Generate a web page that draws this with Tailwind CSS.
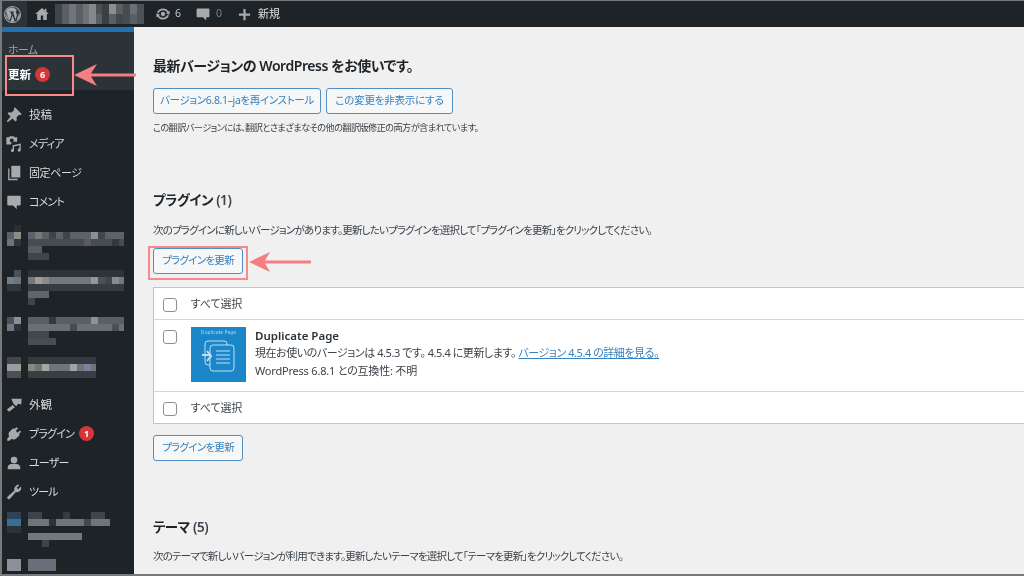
<!DOCTYPE html>
<html lang="ja">
<head>
<meta charset="utf-8">
<script src="https://cdn.jsdelivr.net/npm/@tailwindcss/browser@4"></script>
<title>WordPress 更新</title>
</head>
<body class="m-0 bg-[#f0f0f1]">
<div class="relative w-[1024px] h-[576px] overflow-hidden bg-[#f0f0f1] border-l-2 border-t border-b-2 border-[#77797b] font-['Noto_Sans','Noto_Sans_CJK_JP',sans-serif] [font-feature-settings:'palt'] text-[#3c434a] text-[11.5px] flex flex-col blur-[0.3px]">
  <!-- admin bar -->
  <header class="h-[26px] shrink-0 bg-[#1d2327] text-[#c3c4c7] flex items-center text-[10.5px]">
    <div class="w-[25px] h-[26px] bg-[#2c3338] flex items-center pl-[1px]">
      <svg viewBox="0 0 20 20" class="w-[19px] h-[19px]" fill="#a7aaad"><path fill-rule="evenodd" d="M10 1a9 9 0 1 1 0 18 9 9 0 0 1 0-18Zm0 1a8 8 0 1 0 0 16 8 8 0 0 0 0-16ZM3.200 7l3.600 9.600 2.200-6.300-1-2.600-1-.1v-.8h4.600v.8l-1 .1 2.600 7.600 1-3.100c.4-1.300.5-2 .1-3-.4-.8-.9-1.400-.8-2.100.1-.9 1-1.200 1.300-1.200A7.300 7.300 0 0 0 10 2.700 7.300 7.300 0 0 0 3.200 7Zm13.600.7c.1 1-.1 2-.6 3.300l-2.500 6.500a7.400 7.400 0 0 0 3.100-9.800ZM10.100 11l-2.200 6.300a7.400 7.400 0 0 0 4.400-.1L10.100 11Zm-7.400-2.500a7.400 7.400 0 0 0 3.800 7.500L2.700 8.500Z"/></svg>
    </div>
    <div class="ml-[7px] flex items-center">
      <svg viewBox="0 0 20 20" class="w-[16px] h-[16px]" fill="#a7aaad"><path d="M10 2.500 1.500 10H4v7.500h4.500V12h3v5.500H16V10h2.500L15.500 7.300V3.500h-2v2L10 2.500Z"/></svg>
      <svg class="ml-[5px] w-[89px] h-[20px]" viewBox="0 0 90 20" shape-rendering="crispEdges"><rect width="90" height="20" fill="#5a5f64"/><rect x="0" width="7" height="20" fill="#3f454a"/><rect x="14" width="7" height="20" fill="#71757a"/><rect x="28" width="6" height="20" fill="#6f7378"/><rect x="34" width="7" height="20" fill="#85878a"/><rect x="41" y="0" width="7" height="10" fill="#4b5055"/><rect x="48" width="7" height="20" fill="#3a3f44"/><rect x="55" width="7" height="10" fill="#8b8d8e"/><rect x="62" y="10" width="7" height="10" fill="#43484d"/><rect x="69" width="7" height="20" fill="#474c51"/><rect x="76" width="7" height="10" fill="#6b7075"/><rect x="83" width="7" height="20" fill="#4d5257"/></svg>
    </div>
    <div class="ml-[11px] flex items-center gap-[4px]">
      <svg viewBox="0 0 20 20" class="w-[16px] h-[16px]" fill="#a7aaad"><path d="M10 3c3 0 5.400 1.500 7 4l1.500-1.200-.4 5-4.600-1.600 1.700-1.100C13.900 6.400 12.100 5.300 10 5.300c-2.300 0-4.300 1.400-5.300 3.400L2.500 8C3.800 5 6.700 3 10 3Zm0 14c-3 0-5.400-1.500-7-4l-1.500 1.200.4-5 4.600 1.600-1.700 1.100c1.300 1.700 3.100 2.800 5.200 2.800 2.300 0 4.300-1.400 5.300-3.400l2.200.7C16.200 15 13.300 17 10 17Z"/><circle cx="10" cy="10" r="2.700"/></svg>
      <span>6</span>
    </div>
    <div class="ml-[14px] flex items-center gap-[5px]">
      <svg viewBox="0 0 20 20" class="w-[16px] h-[16px]" fill="#a7aaad"><path d="M3 3h14a1 1 0 0 1 1 1v9a1 1 0 0 1-1 1h-3v4l-4-4H3a1 1 0 0 1-1-1V4a1 1 0 0 1 1-1Z"/></svg>
      <span class="text-[#7b8085]">0</span>
    </div>
    <div class="ml-[15px] flex items-center gap-[6px]">
      <svg viewBox="0 0 20 20" class="w-[15px] h-[15px]" fill="#a7aaad"><path d="M8.500 2.500h3v6h6v3h-6v6h-3v-6h-6v-3h6v-6Z"/></svg>
      <span class="font-medium text-[11px]">新規</span>
    </div>
  </header>

  <div class="flex flex-1 min-h-0">
    <!-- sidebar -->
    <aside class="w-[132px] shrink-0 bg-[#1d2327] text-[#dcdcde] text-[11.5px]">
      <div class="bg-[#2c3338] border-t-[5px] border-[#2271b1] h-[63px] px-[6px] pt-[10px]">
        <div class="text-[#9ca1a6] leading-[16px] text-[11px] tracking-[-0.8px]">ホーム</div>
        <div class="mt-[8px] flex items-center font-bold text-white">更新<span class="ml-[4px] w-[15px] h-[15px] rounded-full bg-[#d63638] text-[9px] font-bold flex items-center justify-center">6</span></div>
      </div>
      <nav class="flex flex-col mt-[10px]">
        <a class="h-[29px] flex items-center gap-[6px] pl-[3px]"><svg viewBox="0 0 20 20" class="w-[18px] h-[18px]" fill="#a7aaad"><path d="M11 1.500 18.500 9l-1.400 1.200-1.300-.6-3 3 .3 3.200-1.400 1.400-3.400-3.400L3 18l-1-1 4.200-5.300-3.400-3.400 1.400-1.400 3.200.3 3-3-.6-1.300L11 1.500Z"/></svg><span>投稿</span></a>
        <a class="h-[29px] flex items-center gap-[6px] pl-[3px]"><svg viewBox="0 0 20 20" class="w-[18px] h-[18px]" fill="#a7aaad"><path fill-rule="evenodd" d="M1.500 2.500h3l1-1h4l1 1h3v5h-4a4 4 0 0 0-3 3H1.500v-8Zm6 1.500a2.200 2.200 0 1 0 0 4.400A2.200 2.200 0 0 0 7.500 4Z"/><path d="M8.500 11.500l9-2v7.300a1.700 1.700 0 1 1-1.500-1.700v-3.600l-6 1.300v4.500a1.700 1.700 0 1 1-1.500-1.700v-4.100Z"/></svg><span class="mt-[2px] text-[11px] tracking-[-0.8px]">メディア</span></a>
        <a class="h-[29px] flex items-center gap-[6px] pl-[3px]"><svg viewBox="0 0 20 20" class="w-[18px] h-[18px]" fill="#a7aaad"><path d="M7 2h10v13H7V2Z"/><path d="M5 5H3.500v13H14v-1.500H5V5Z"/></svg><span class="mt-[2px] text-[11px] tracking-[-0.4px]">固定ページ</span></a>
        <a class="h-[29px] flex items-center gap-[6px] pl-[3px]"><svg viewBox="0 0 20 20" class="w-[18px] h-[18px]" fill="#a7aaad"><path d="M4 3h12a1.500 1.500 0 0 1 1.500 1.500v8A1.500 1.500 0 0 1 16 14h-3v4l-4-4H4a1.500 1.500 0 0 1-1.500-1.500v-8A1.500 1.500 0 0 1 4 3Z"/></svg><span class="mt-[2px] text-[11px] tracking-[-0.8px]">コメント</span></a>
      </nav>
      <!-- pixelated custom menu items -->
      <svg class="block mt-[6px] w-[132px] h-[168px]" viewBox="0 0 132 168" shape-rendering="crispEdges">
        <g fill="#4b5258">
          <rect x="26" y="10" width="96" height="7" fill="#5c6368"/><rect x="26" y="17" width="96" height="7" fill="#454c52"/><rect x="26" y="24" width="14" height="7" fill="#565c62"/><rect x="26" y="31" width="21" height="7" fill="#3e454b"/>
          <rect x="5" y="10" width="7" height="7" fill="#56616c"/><rect x="12" y="10" width="7" height="7" fill="#8d8d88"/><rect x="5" y="17" width="7" height="7" fill="#6a747e"/><rect x="12" y="17" width="7" height="7" fill="#31363a"/><rect x="12" y="3" width="7" height="7" fill="#2a2f33"/>
          <rect x="33" y="10" width="7" height="7" fill="#757c76"/><rect x="47" y="10" width="7" height="7" fill="#3d444a"/><rect x="61" y="10" width="7" height="7" fill="#3d444a"/><rect x="89" y="10" width="7" height="7" fill="#8e9090"/><rect x="96" y="10" width="7" height="7" fill="#40464c"/><rect x="82" y="17" width="7" height="7" fill="#5d5760"/><rect x="110" y="17" width="7" height="7" fill="#32393e"/>

          <rect x="26" y="48" width="96" height="7" fill="#2d3338"/><rect x="26" y="55" width="96" height="7" fill="#73787c"/><rect x="26" y="62" width="96" height="7" fill="#353c42"/><rect x="26" y="69" width="21" height="7" fill="#5f6569"/><rect x="26" y="76" width="7" height="7" fill="#3e454a"/>
          <rect x="12" y="48" width="7" height="7" fill="#4a5055"/><rect x="5" y="55" width="7" height="7" fill="#6d7f92"/><rect x="12" y="55" width="7" height="7" fill="#72736e"/><rect x="5" y="62" width="14" height="7" fill="#31373c"/>
          <rect x="33" y="55" width="7" height="7" fill="#9b9f9f"/><rect x="40" y="55" width="7" height="7" fill="#8f8a85"/><rect x="89" y="55" width="7" height="7" fill="#94979a"/><rect x="96" y="55" width="7" height="7" fill="#4b5157"/><rect x="103" y="55" width="7" height="7" fill="#3f454b"/><rect x="110" y="55" width="7" height="7" fill="#888c8c"/>

          <rect x="26" y="95" width="96" height="7" fill="#595f66"/><rect x="26" y="102" width="96" height="7" fill="#6a6f74"/><rect x="26" y="109" width="21" height="7" fill="#40474e"/><rect x="26" y="116" width="28" height="7" fill="#474d55"/>
          <rect x="5" y="95" width="7" height="7" fill="#48535e"/><rect x="12" y="95" width="7" height="7" fill="#8e8e8c"/><rect x="5" y="102" width="7" height="7" fill="#6e7882"/><rect x="12" y="102" width="7" height="7" fill="#2f3337"/>
          <rect x="47" y="95" width="7" height="7" fill="#33393f"/><rect x="89" y="95" width="7" height="7" fill="#8f9090"/><rect x="68" y="102" width="7" height="7" fill="#454b51"/><rect x="110" y="102" width="7" height="7" fill="#4a5057"/>

          <rect x="26" y="135" width="68" height="7" fill="#343a40"/><rect x="26" y="142" width="68" height="7" fill="#70757a"/><rect x="26" y="149" width="68" height="7" fill="#383e43"/>
          <rect x="5" y="135" width="14" height="7" fill="#41474c"/><rect x="5" y="142" width="14" height="7" fill="#9a9c9e"/><rect x="5" y="149" width="14" height="7" fill="#4a5055"/>
          <rect x="40" y="142" width="7" height="7" fill="#a3a9a9"/><rect x="68" y="142" width="7" height="7" fill="#a0a59e"/><rect x="82" y="142" width="7" height="7" fill="#7f7f9a"/><rect x="26" y="142" width="7" height="7" fill="#87897a"/>
        </g>
      </svg>
      <nav class="flex flex-col">
        <a class="h-[29px] flex items-center gap-[6px] pl-[3px]"><svg viewBox="0 0 20 20" class="w-[18px] h-[18px]" fill="#a7aaad"><path d="M7 3h11.500l-.5 6.500-3.500-1-2 3-3-2.500L7 3Zm1.500 7 2.500 2.500-6.500 5L2 15l6.500-5Z"/></svg><span>外観</span></a>
        <a class="h-[29px] flex items-center gap-[6px] pl-[3px]"><svg viewBox="0 0 20 20" class="w-[18px] h-[18px]" fill="#a7aaad"><path d="M13 2.500l1.500 1.500-2.500 2.500 2 2 2.500-2.500L18 7.500l-2.500 2.500 1 1-4 4c-1.500 1.500-3.800 1.300-5 .3L5 17.500H2.500V15l2.200-2.500c-1-1.300-1.200-3.500.3-5l4-4 1 1L13 2.500Z"/></svg><span class="flex items-center"><span class="mt-[2px] text-[11px] tracking-[-0.8px]">プラグイン</span><span class="ml-[5px] w-[15px] h-[15px] rounded-full bg-[#d63638] text-white text-[9px] font-bold flex items-center justify-center">1</span></span></a>
        <a class="h-[29px] flex items-center gap-[6px] pl-[3px]"><svg viewBox="0 0 20 20" class="w-[18px] h-[18px]" fill="#a7aaad"><path d="M10 3a3.500 3.500 0 1 1 0 7.500A3.500 3.500 0 0 1 10 3Zm-7 14v-2c0-2.500 2-4 4-4h6c2 0 4 1.500 4 4v2H3Z"/></svg><span class="mt-[2px] text-[11px] tracking-[-0.8px]">ユーザー</span></a>
        <a class="h-[29px] flex items-center gap-[6px] pl-[3px]"><svg viewBox="0 0 20 20" class="w-[18px] h-[18px]" fill="#a7aaad"><path d="M14.500 2a4.500 4.500 0 0 1 1.500.3L13 5.300l1.700 1.700 3-3c.6 1.800.2 3.700-1 5-1.300 1.200-3 1.500-4.600 1L5.500 17.500c-.7.700-1.800.7-2.500 0s-.7-1.800 0-2.500l7.500-6.600c-.5-1.600-.2-3.300 1-4.600.8-1.100 1.800-1.800 3-1.800Z"/></svg><span class="mt-[2px] text-[11px] tracking-[-0.8px]">ツール</span></a>
      </nav>
      <svg class="block mt-[1px] w-[132px] h-[64px]" viewBox="0 0 132 64" shape-rendering="crispEdges">
        <rect x="5" y="5" width="14" height="7" fill="#2d4357"/><rect x="5" y="12" width="14" height="7" fill="#3b6e94"/><rect x="5" y="19" width="14" height="7" fill="#2c3338"/>
        <rect x="26" y="5" width="14" height="7" fill="#3c4349"/><rect x="26" y="12" width="82" height="7" fill="#6e7478"/><rect x="26" y="26" width="54" height="7" fill="#72797b"/><rect x="40" y="33" width="7" height="7" fill="#3c434a"/>
        <rect x="47" y="12" width="7" height="7" fill="#2d3338"/><rect x="82" y="12" width="7" height="7" fill="#42484d"/><rect x="61" y="5" width="7" height="7" fill="#353b41"/><rect x="89" y="5" width="14" height="7" fill="#3f464b"/>
        <rect x="5" y="52" width="14" height="12" fill="#8d8f99"/><rect x="26" y="52" width="28" height="12" fill="#696f78"/>
      </svg>
    </aside>

    <!-- main -->
    <main class="flex-1 min-w-0 pl-[19px] overflow-hidden">
      <h2 class="mt-[28px] text-[14px] leading-[22px] font-semibold text-[#1d2327] tracking-[-0.45px] whitespace-nowrap">最新バージョンの WordPress をお使いです。</h2>
      <div class="mt-[11px] flex gap-[5px]">
        <button class="h-[26px] w-[168px] border border-[#4f8fc4] rounded-[3px] bg-[#f6f7f7] text-[#3a82bd] text-[10.5px] whitespace-nowrap tracking-[-0.35px]">バージョン6.8.1–jaを再インストール</button>
        <button class="h-[26px] w-[127px] border border-[#4f8fc4] rounded-[3px] bg-[#f6f7f7] text-[#3a82bd] text-[10.5px] whitespace-nowrap tracking-[-0.2px]">この変更を非表示にする</button>
      </div>
      <p class="mt-[7px] text-[9.2px] leading-[14px] tracking-[-0.6px] whitespace-nowrap">この翻訳バージョンには、翻訳とさまざまなその他の翻訳版修正の両方が含まれています。</p>

      <h2 class="mt-[55px] text-[13.5px] leading-[20px] font-semibold text-[#1d2327] tracking-[-0.4px]">プラグイン <span class="text-[#3c434a]">(1)</span></h2>
      <p class="mt-[12px] text-[10.5px] leading-[16px] tracking-[-0.8px] whitespace-nowrap">次のプラグインに新しいバージョンがあります。更新したいプラグインを選択して「プラグインを更新」をクリックしてください。</p>
      <button class="mt-[10px] block h-[26px] w-[90px] border border-[#4f8fc4] rounded-[3px] bg-[#f6f7f7] text-[#3a82bd] text-[10.5px] whitespace-nowrap tracking-[-0.7px]">プラグインを更新</button>

      <div class="mt-[13px] w-[900px] bg-white border border-[#c3c4c7]">
        <div class="h-[31px] pt-[2px] flex items-center pl-[9px] gap-[13px]">
          <span class="w-[14px] h-[14px] border border-[#8c8f94] rounded-[3px] bg-white"></span><span class="text-[11px] [font-feature-settings:normal] tracking-[-0.4px]">すべて選択</span>
        </div>
        <div class="h-[73px] border-t border-b border-[#d6d7d9] flex pl-[9px]">
          <span class="mt-[10px] w-[14px] h-[14px] border border-[#8c8f94] rounded-[3px] bg-white"></span>
          <div class="ml-[14px] mt-[7px] w-[55px] h-[55px] bg-[#1b87c9] flex flex-col items-center">
            <span class="mt-[2px] text-[5px] leading-[7px] text-[#a8d4ef] whitespace-nowrap">Duplicate Page</span>
            <svg viewBox="0 0 40 36" class="w-[40px] h-[36px] mt-[2px]" fill="none" stroke="#bfe0f5" stroke-width="1"><rect x="6" y="3" width="22" height="24" rx="3"/><rect x="11" y="7" width="24" height="26" rx="3" fill="#1b87c9"/><path d="M17 13h14M17 17h14M17 21h14M17 25h14"/><path d="M3 17h8M8 13l4 5-4 5" stroke-width="2"/></svg>
          </div>
          <div class="ml-[9px] mt-[7px]">
            <div class="text-[11.5px] leading-[17px] font-semibold text-[#2c3338]">Duplicate Page</div>
            <div class="leading-[18px] text-[11px] tracking-[-0.45px] whitespace-nowrap">現在お使いのバージョンは 4.5.3 です。 4.5.4 に更新します。 <a class="text-[#3a82bd] underline">バージョン 4.5.4 の詳細を見る。</a></div>
            <div class="leading-[17px] text-[11px] tracking-[-0.2px] whitespace-nowrap">WordPress 6.8.1 との互換性: 不明</div>
          </div>
        </div>
        <div class="h-[31px] pt-[2px] flex items-center pl-[9px] gap-[13px]">
          <span class="w-[14px] h-[14px] border border-[#8c8f94] rounded-[3px] bg-white"></span><span class="text-[11px] [font-feature-settings:normal] tracking-[-0.4px]">すべて選択</span>
        </div>
      </div>
      <button class="mt-[11px] block h-[26px] w-[90px] border border-[#4f8fc4] rounded-[3px] bg-[#f6f7f7] text-[#3a82bd] text-[10.5px] whitespace-nowrap tracking-[-0.7px]">プラグインを更新</button>

      <h2 class="mt-[56px] text-[13.5px] leading-[20px] font-semibold text-[#1d2327] tracking-[-0.4px]">テーマ <span class="text-[#3c434a]">(5)</span></h2>
      <p class="mt-[11px] text-[10.5px] leading-[16px] tracking-[-0.8px] whitespace-nowrap">次のテーマで新しいバージョンが利用できます。更新したいテーマを選択して「テーマを更新」をクリックしてください。</p>
    </main>
  </div>

  <!-- annotations -->
  <div class="absolute left-[3px] top-[54px] w-[69px] h-[41px] border-2 border-[#f88a8a]"></div>
  <div class="absolute left-[146px] top-[245px] w-[100px] h-[34px] border-2 border-[#f88a8a]"></div>
  <svg class="absolute left-[69px] top-[60px] w-[65px] h-[28px]" viewBox="0 0 65 28" fill="#f47f80"><path d="M3 14 26 3l-6 9.500h45v3H20l6 9.500Z"/></svg>
  <svg class="absolute left-[245px] top-[247px] w-[66px] h-[28px]" viewBox="0 0 66 28" fill="#f47f80"><path d="M2 14 23 4l-5 8.500h46v3H18l5 8.500Z"/></svg>
</div>
</body>
</html>
